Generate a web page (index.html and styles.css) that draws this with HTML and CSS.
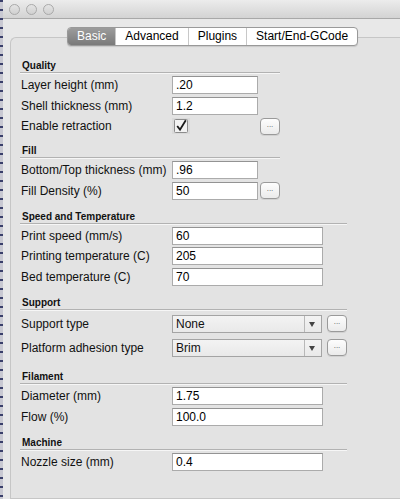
FILE: index.html
```html
<!DOCTYPE html>
<html>
<head>
<meta charset="utf-8">
<link rel="stylesheet" href="styles.css">
</head>
<body>
<div class="screen">
  <div class="backwin"></div>
  <div class="window">
    <div class="titlebar">
      <span class="light"></span><span class="light"></span><span class="light"></span>
    </div>
    <div class="content">
      <div class="tabs">
        <span class="tab active">Basic</span>
        <span class="tab">Advanced</span>
        <span class="tab">Plugins</span>
        <span class="tab last">Start/End-GCode</span>
      </div>
      <div class="pane">
        <div class="section narrow first">
          <div class="head">Quality</div>
          <div class="row"><label>Layer height (mm)</label><span class="input">.20</span></div>
          <div class="row"><label>Shell thickness (mm)</label><span class="input">1.2</span></div>
          <div class="row"><label>Enable retraction</label><span class="check"><svg width="14" height="14" viewBox="0 0 14 14"><rect x="0.5" y="0.5" width="13" height="13" rx="1" fill="#f2f2f2" stroke="#8c8c8c"/><path d="M3.2 7 L6 10.6 L11.8 1.2" fill="none" stroke="#1a1a1a" stroke-width="1.8"/></svg></span><span class="dots">...</span></div>
        </div>
        <div class="section narrow">
          <div class="head">Fill</div>
          <div class="row"><label>Bottom/Top thickness (mm)</label><span class="input">.96</span></div>
          <div class="row"><label>Fill Density (%)</label><span class="input">50</span><span class="dots">...</span></div>
        </div>
        <div class="section wide">
          <div class="head">Speed and Temperature</div>
          <div class="row"><label>Print speed (mm/s)</label><span class="input">60</span></div>
          <div class="row"><label>Printing temperature (C)</label><span class="input">205</span></div>
          <div class="row"><label>Bed temperature (C)</label><span class="input">70</span></div>
        </div>
        <div class="section wide support">
          <div class="head">Support</div>
          <div class="row srow"><label>Support type</label><span class="select"><span class="sval">None</span><span class="arrow"></span></span><span class="dots">...</span></div>
          <div class="row srow"><label>Platform adhesion type</label><span class="select"><span class="sval">Brim</span><span class="arrow"></span></span><span class="dots">...</span></div>
        </div>
        <div class="section wide">
          <div class="head">Filament</div>
          <div class="row"><label>Diameter (mm)</label><span class="input">1.75</span></div>
          <div class="row"><label>Flow (%)</label><span class="input">100.0</span></div>
        </div>
        <div class="section wide">
          <div class="head">Machine</div>
          <div class="row"><label>Nozzle size (mm)</label><span class="input">0.4</span></div>
        </div>
      </div>
    </div>
  </div>
</div>
</body>
</html>
```
FILE: styles.css
```css
html, body { margin: 0; padding: 0; }
body { width: 400px; height: 499px; overflow: hidden; background: #e4e4e4; font-family: "Liberation Sans", Arial, sans-serif; font-size: 12px; color: #111; }
.screen { display: flex; height: 499px; }
.backwin { width: 3px; flex: none; background: repeating-linear-gradient(180deg, #3a3f6a 0 2px, #c9c9d2 2px 9px); }
.window { flex: 1; display: flex; flex-direction: column; min-width: 0; }
.titlebar { height: 19px; flex: none; background: linear-gradient(#ececec, #d3d3d3); border-bottom: 1px solid #a8a8a8; display: flex; align-items: center; gap: 6px; padding-left: 6px; box-sizing: border-box; }
.light { width: 11px; height: 11px; border-radius: 50%; background: linear-gradient(#e4e4e4, #d0d0d0); border: 1px solid #a9a9a9; box-sizing: border-box; }
.content { flex: 1; background: #e8e8e8; padding: 8px 0 0 7px; display: flex; flex-direction: column; }
.tabs { display: flex; margin-left: 57px; height: 17px; position: relative; z-index: 2; margin-bottom: -9px; border: 1px solid #999; border-radius: 4px; width: max-content; background: #fff; overflow: hidden; box-shadow: 0 1px 1px rgba(0,0,0,0.12); }
.tab { padding: 0 9px; line-height: 17px; border-left: 1px solid #c8c8c8; font-size: 12px; color: #000; }
.tab:first-child { border-left: none; }
.tab.active { background: linear-gradient(#9c9c9c, #7a7a7a); color: #fff; }
.tab.last { padding: 0 9px; }
.pane { flex: 1; border: 1px solid #c6c6c6; border-right: none; border-radius: 6px 0 0 0; background: #e3e3e3; padding: 19px 0 0 9px; }
.section { display: flex; flex-direction: column; margin-bottom: 6.5px; }
.section.first { margin-bottom: 5.5px; }
.section.support { margin-bottom: 8.5px; }
.section.narrow { width: 260px; }
.section.wide { width: 327px; }
.head { font-weight: bold; font-size: 10px; padding: 1px 0 0 2px; height: 16px; box-sizing: border-box; line-height: 15px; border-bottom: 1px solid #b2b2b2; margin-bottom: 2px; box-shadow: 0 1px 0 #f6f6f6; }
.row { display: flex; align-items: center; height: 20.5px; }
.row label { width: 151px; flex: none; padding-left: 1px; font-size: 12px; white-space: nowrap; }
.input { height: 18px; box-sizing: border-box; border: 1px solid #ababab; border-top-color: #939393; background: #fff; padding-left: 3px; line-height: 16px; font-size: 12px; color: #000; }
.narrow .input { width: 86px; }
.wide .input { width: 151px; }
.check { width: 18px; height: 16px; display: flex; align-items: center; justify-content: center; background: #dadada; }
.dots { margin-left: auto; width: 20px; height: 17px; box-sizing: border-box; border: 1px solid #9a9a9a; border-radius: 4px; background: linear-gradient(#fdfdfd, #ebebeb); font-size: 8px; line-height: 12px; text-align: center; color: #555; box-shadow: 0 1px 0 rgba(0,0,0,0.08); }
.select { width: 150px; height: 18px; box-sizing: border-box; border: 1px solid #a4a4a4; background: linear-gradient(#f3f3f3, #e9e9e9); display: flex; }
.sval { flex: 1; padding-left: 3px; line-height: 16px; font-size: 12px; }
.arrow { width: 15px; border-left: 1px solid #b8b8b8; position: relative; margin-right: 1px; }
.arrow::after { content: ""; position: absolute; left: 4px; top: 6px; border-left: 3px solid transparent; border-right: 3px solid transparent; border-top: 5px solid #444; }
.srow { height: 24px; }
.srow .dots { margin-left: 5px; }
```
